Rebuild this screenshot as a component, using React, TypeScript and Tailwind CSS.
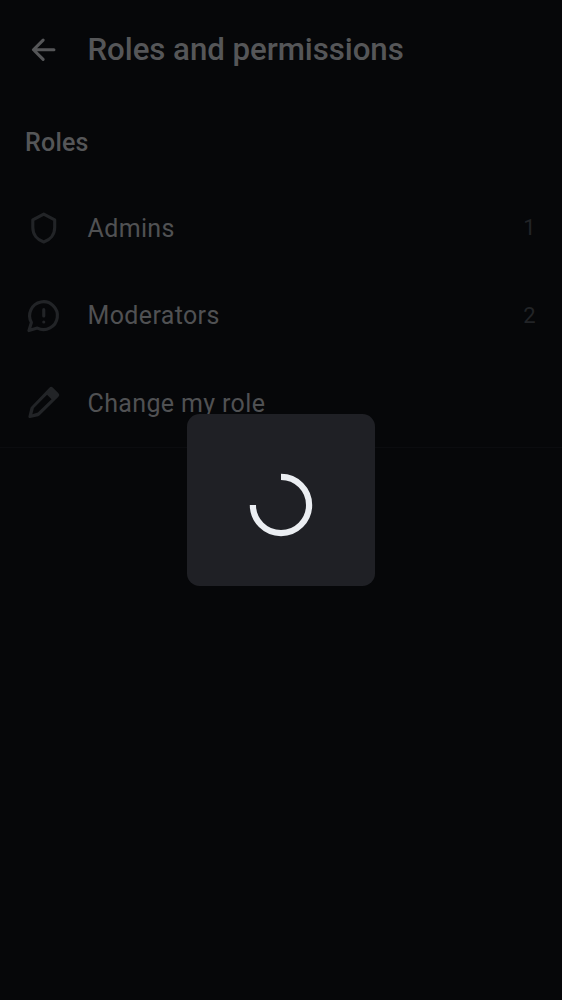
import type { ReactNode } from "react";

function ArrowLeftIcon() {
  return (
    <svg viewBox="0 0 24 24" className="size-[37.5px] shrink-0 text-[#555658]" fill="none" stroke="currentColor" strokeWidth="2" strokeLinecap="round" strokeLinejoin="round">
      <path d="M18.5 12H5.6M11.6 5.9 5.4 12l6.2 6.1" />
    </svg>
  );
}

function ShieldIcon() {
  return (
    <svg viewBox="0 0 24 24" className="size-[37.5px] shrink-0" fill="none" stroke="currentColor" strokeWidth="2" strokeLinejoin="round">
      <path d="M12 3.3 19 7v4.8c0 4.5-2.8 7.9-7 9.3-4.2-1.4-7-4.8-7-9.3V7Z" />
    </svg>
  );
}

function ChatProblemIcon() {
  return (
    <svg viewBox="0 0 24 24" className="size-[37.5px] shrink-0" fill="none" stroke="currentColor" strokeWidth="2" strokeLinejoin="round">
      <path d="M4.1 16.3A8.9 8.9 0 1 1 7.9 19.9L2.5 21.5Z" />
      <path d="M12 8.1v4" strokeLinecap="round" />
      <circle cx="12" cy="16" r="1" fill="currentColor" stroke="none" />
    </svg>
  );
}

function EditIcon() {
  return (
    <svg viewBox="0 0 24 24" className="size-[37.5px] shrink-0" fill="currentColor" fillRule="evenodd">
      <path d="M15.6 2.4a1.6 1.6 0 0 1 2.3 0L21.4 5.9a1.6 1.6 0 0 1 0 2.3L9.4 20a2 2 0 0 1-1 .6L3.3 21.8a.9.9 0 0 1-1.1-1.1L3.4 15.6a2 2 0 0 1 .6-1.1ZM14.1 6.9 5.7 15.3 4.7 19.3 8.2 18.2 17 9.8Z" />
    </svg>
  );
}

function RoleRow({ icon, label, count }: { icon: ReactNode; label: string; count?: number }) {
  return (
    <li className="flex h-[87.5px] items-center gap-[25px] px-[25px] text-[25px] text-[#222427]">
      {icon}
      <span className="grow pt-px tracking-[0.36px] text-[#505153]">{label}</span>
      {count !== undefined && <span className="pr-px text-[22px] tracking-[0.39px]">{count}</span>}
    </li>
  );
}

export default function App() {
  return (
    <main className="relative h-[1000px] w-[562px] overflow-hidden bg-[#060709] font-['Roboto',sans-serif]">
      <header className="flex h-[100px] items-center gap-[25px] px-[25px] text-[#555658]">
        <ArrowLeftIcon />
        <h1 className="text-[31.25px] font-medium leading-none tracking-[-0.06px]">Roles and permissions</h1>
      </header>
      <section className="border-b border-[#0b0c0f]">
        <h2 className="flex h-[84px] items-center px-[25px] pt-px text-[25px] font-medium tracking-[0.23px] text-[#555658]">Roles</h2>
        <ul>
          <RoleRow icon={<ShieldIcon />} label="Admins" count={1} />
          <RoleRow icon={<ChatProblemIcon />} label="Moderators" count={2} />
          <RoleRow icon={<EditIcon />} label="Change my role" />
        </ul>
      </section>
      <div role="dialog" aria-label="Loading" className="absolute left-[187px] top-[414px] flex h-[172px] w-[188px] items-center justify-center rounded-[12.5px] bg-[#1f2025]">
        <svg viewBox="0 0 64 64" className="mt-[9px] size-16" fill="none" stroke="#ebeef2" strokeWidth="6.2">
          <path d="M32 3.9A28.1 28.1 0 1 1 3.9 32" />
        </svg>
      </div>
    </main>
  );
}
